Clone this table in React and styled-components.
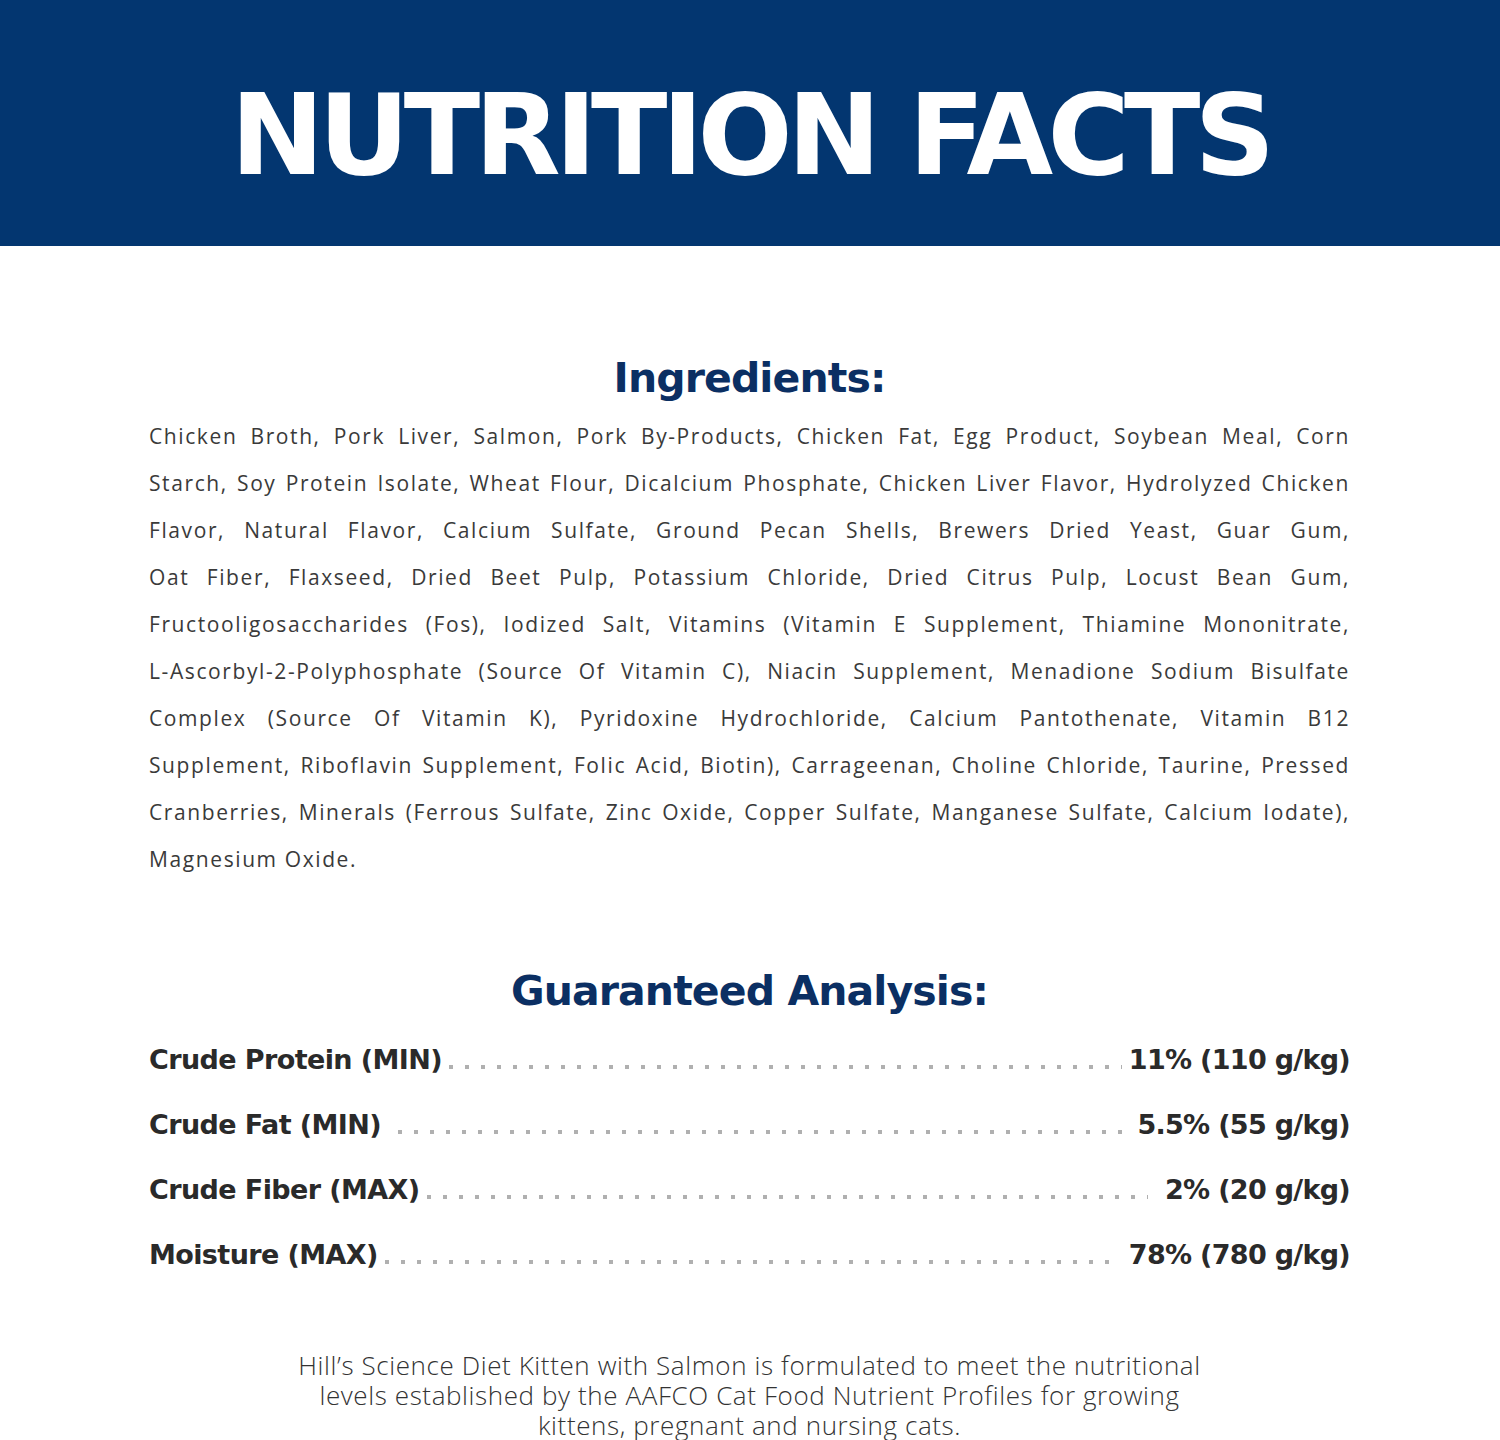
import styled, { createGlobalStyle } from "styled-components"

const Global = createGlobalStyle`
  html, body { margin: 0; padding: 0; background: #ffffff; }
  body { width: 1500px; }
`

const Banner = styled.header`
  height: 246px;
  background: #033670;
  display: flex;
  align-items: center;
  justify-content: center;
  padding-top: 24px;
  box-sizing: border-box;
`

const Title = styled.h1`
  margin: 0;
  color: #ffffff;
  font-family: "DejaVu Sans", sans-serif;
  font-weight: 700;
  font-size: 112px;
  line-height: 1;
  letter-spacing: -5.7px;
`

const Main = styled.main`
  padding: 0 150px 0 149px;
  display: flex;
  flex-direction: column;
`

const Heading = styled.h2`
  margin: ${p => p.$top}px 0 0;
  text-align: center;
  color: #0b2f63;
  font-family: "DejaVu Sans", sans-serif;
  font-weight: 700;
  font-size: 41px;
  line-height: 50px;
  letter-spacing: -0.9px;
`

const Ingredients = styled.div`
  margin-top: 10px;
  font-family: "Open Sans", sans-serif;
  font-size: 21px;
  letter-spacing: 1.6px;
  color: #3a3a3a;
  line-height: 47px;
`

const Line = styled.div`
  text-align: ${p => (p.$last ? "left" : "justify")};
  text-align-last: ${p => (p.$last ? "left" : "justify")};
`

const Rows = styled.div`
  margin-top: 11px;
`

const Row = styled.div`
  height: 65px;
  display: flex;
  align-items: center;
  gap: 7px;
  font-family: "DejaVu Sans", sans-serif;
  font-weight: 700;
  font-size: 27px;
  color: #2a2a2a;
`

const Label = styled.span`
  white-space: nowrap;
  letter-spacing: -0.6px;
`

const Leader = styled.span`
  flex: 1;
  height: 4px;
  margin-top: 14px;
  margin-left: ${p => p.$pad || 0}px;
  margin-right: ${p => p.$padR || 0}px;
  background-image: linear-gradient(to right, #b0b0b0 4px, transparent 4px);
  background-size: 16px 4px;
  background-repeat: repeat-x;
`

const Value = styled.span`
  white-space: nowrap;
  letter-spacing: -0.7px;
`

const Note = styled.p`
  margin: 63px 0 0;
  text-align: center;
  font-family: "Open Sans", sans-serif;
  font-weight: 300;
  font-size: 26px;
  letter-spacing: 0.6px;
  line-height: 30px;
  color: #333333;
`

const lines = [
  "Chicken Broth, Pork Liver, Salmon, Pork By-Products, Chicken Fat, Egg Product, Soybean Meal, Corn",
  "Starch, Soy Protein Isolate, Wheat Flour, Dicalcium Phosphate, Chicken Liver Flavor, Hydrolyzed Chicken",
  "Flavor, Natural Flavor, Calcium Sulfate, Ground Pecan Shells, Brewers Dried Yeast, Guar Gum,",
  "Oat Fiber, Flaxseed, Dried Beet Pulp, Potassium Chloride, Dried Citrus Pulp, Locust Bean Gum,",
  "Fructooligosaccharides (Fos), Iodized Salt, Vitamins (Vitamin E Supplement, Thiamine Mononitrate,",
  "L-Ascorbyl-2-Polyphosphate (Source Of Vitamin C), Niacin Supplement, Menadione Sodium Bisulfate",
  "Complex (Source Of Vitamin K), Pyridoxine Hydrochloride, Calcium Pantothenate, Vitamin B12",
  "Supplement, Riboflavin Supplement, Folic Acid, Biotin), Carrageenan, Choline Chloride, Taurine, Pressed",
  "Cranberries, Minerals (Ferrous Sulfate, Zinc Oxide, Copper Sulfate, Manganese Sulfate, Calcium Iodate),",
  "Magnesium Oxide.",
]

const analysis = [
  { label: "Crude Protein (MIN)", value: "11% (110 g/kg)", pad: 0, padR: 0 },
  { label: "Crude Fat (MIN)", value: "5.5% (55 g/kg)", pad: 10, padR: 0 },
  { label: "Crude Fiber (MAX)", value: "2% (20 g/kg)", pad: 0, padR: 10 },
  { label: "Moisture (MAX)", value: "78% (780 g/kg)", pad: 0, padR: 4 },
]

export default function App() {
  return (
    <>
      <Global />
      <Banner>
        <Title>NUTRITION FACTS</Title>
      </Banner>
      <Main>
        <Heading $top={107}>Ingredients:</Heading>
        <Ingredients>
          {lines.map((l, i) => (
            <Line key={i} $last={i === lines.length - 1}>{l}</Line>
          ))}
        </Ingredients>

        <Heading $top={83}>Guaranteed Analysis:</Heading>
        <Rows>
          {analysis.map(a => (
            <Row key={a.label}>
              <Label>{a.label}</Label>
              <Leader $pad={a.pad} $padR={a.padR} />
              <Value>{a.value}</Value>
            </Row>
          ))}
        </Rows>

        <Note>
          Hill’s Science Diet Kitten with Salmon is formulated to meet the nutritional
          <br />
          levels established by the AAFCO Cat Food Nutrient Profiles for growing
          <br />
          kittens, pregnant and nursing cats.
        </Note>
      </Main>
    </>
  )
}
